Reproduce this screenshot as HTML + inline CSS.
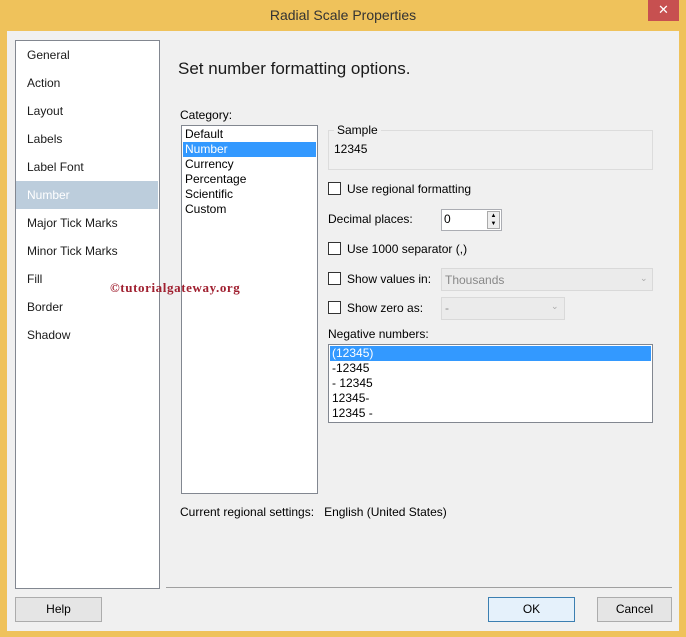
<!DOCTYPE html><html><head><style>
*{margin:0;padding:0;box-sizing:border-box}
body{width:686px;height:637px;background:#efc25b;font-family:"Liberation Sans",sans-serif;font-size:12px;color:#000;position:relative;overflow:hidden}
.a{position:absolute;white-space:nowrap}
.cb{position:absolute;width:13px;height:13px;border:1px solid #333;background:#fff}
.btn{position:absolute;border:1px solid #acacac;background:#e5e5e5;text-align:center;line-height:23px;height:25px}
</style></head><body>
<div class="a" style="left:0;top:7px;width:686px;text-align:center;font-size:14px;color:#333">Radial Scale Properties</div>
<div class="a" style="left:648px;top:0;width:31px;height:21px;background:#c75050;color:#fff;text-align:center;line-height:20px;font-size:13px">✕</div>
<div class="a" style="left:7px;top:31px;width:672px;height:600px;background:#f0f0f0"></div>
<div class="a" style="left:15px;top:40px;width:145px;height:549px;background:#fff;border:1px solid #828790"></div>
<div class="a" style="left:16px;top:181px;width:142px;height:28px;background:#bccddc"></div>
<div class="a" style="left:27px;top:41px;line-height:28px;color:#1a1a1a">General<br>Action<br>Layout<br>Labels<br>Label Font<br><span style="color:#fff">Number</span><br>Major Tick Marks<br>Minor Tick Marks<br>Fill<br>Border<br>Shadow</div>
<div class="a" style="left:178px;top:59px;font-size:17px;color:#1a1a1a">Set number formatting options.</div>
<div class="a" style="left:180px;top:108px">Category:</div>
<div class="a" style="left:181px;top:125px;width:137px;height:369px;background:#fff;border:1px solid #828790"></div>
<div class="a" style="left:183px;top:142px;width:133px;height:15px;background:#3399ff"></div>
<div class="a" style="left:185px;top:127px;line-height:15px">Default<br><span style="color:#fff">Number</span><br>Currency<br>Percentage<br>Scientific<br>Custom</div>
<div class="a" style="left:110px;top:280px;font-size:13px;font-weight:bold;color:#a02030;font-family:'Liberation Serif',serif;letter-spacing:0.6px">©tutorialgateway.org</div>
<div class="a" style="left:328px;top:130px;width:325px;height:40px;border:1px solid #dcdcdc"></div>
<div class="a" style="left:334px;top:123px;background:#f0f0f0;padding:0 3px">Sample</div>
<div class="a" style="left:334px;top:142px">12345</div>
<div class="cb" style="left:328px;top:182px"></div><div class="a" style="left:347px;top:182px">Use regional formatting</div>
<div class="a" style="left:328px;top:212px">Decimal places:</div>
<div class="a" style="left:441px;top:209px;width:61px;height:22px;background:#fff;border:1px solid #abadb3"></div>
<div class="a" style="left:444px;top:212px">0</div>
<div class="a" style="left:487px;top:211px;width:13px;height:18px;border:1px solid #aaa;background:#eee;font-size:6px;line-height:8px;text-align:center">▲<br>▼</div>
<div class="cb" style="left:328px;top:242px"></div><div class="a" style="left:347px;top:242px">Use 1000 separator (,)</div>
<div class="cb" style="left:328px;top:272px"></div><div class="a" style="left:347px;top:272px">Show values in:</div>
<div class="a" style="left:441px;top:268px;width:212px;height:23px;border:1px solid #d9d9d9;background:#ebebeb"></div>
<div class="a" style="left:445px;top:273px;color:#888">Thousands</div><div class="a" style="left:640px;top:273px;color:#aaa;font-size:9px">⌄</div>
<div class="cb" style="left:328px;top:301px"></div><div class="a" style="left:347px;top:301px">Show zero as:</div>
<div class="a" style="left:441px;top:297px;width:124px;height:23px;border:1px solid #d9d9d9;background:#ebebeb"></div>
<div class="a" style="left:445px;top:301px;color:#888">-</div><div class="a" style="left:551px;top:301px;color:#aaa;font-size:9px">⌄</div>
<div class="a" style="left:328px;top:327px">Negative numbers:</div>
<div class="a" style="left:328px;top:344px;width:325px;height:79px;background:#fff;border:1px solid #828790"></div>
<div class="a" style="left:330px;top:346px;width:321px;height:15px;background:#3399ff"></div>
<div class="a" style="left:332px;top:346px;line-height:15px"><span style="color:#fff">(12345)</span><br>-12345<br>- 12345<br>12345-<br>12345 -</div>
<div class="a" style="left:180px;top:505px">Current regional settings:&nbsp;&nbsp;&nbsp;English (United States)</div>
<div class="a" style="left:166px;top:587px;width:506px;height:1px;background:#a0a0a0"></div>
<div class="btn" style="left:15px;top:597px;width:87px">Help</div>
<div class="btn" style="left:488px;top:597px;width:87px;border-color:#3c7fb1;background:#e5f1fb">OK</div>
<div class="btn" style="left:597px;top:597px;width:75px">Cancel</div>
</body></html>
